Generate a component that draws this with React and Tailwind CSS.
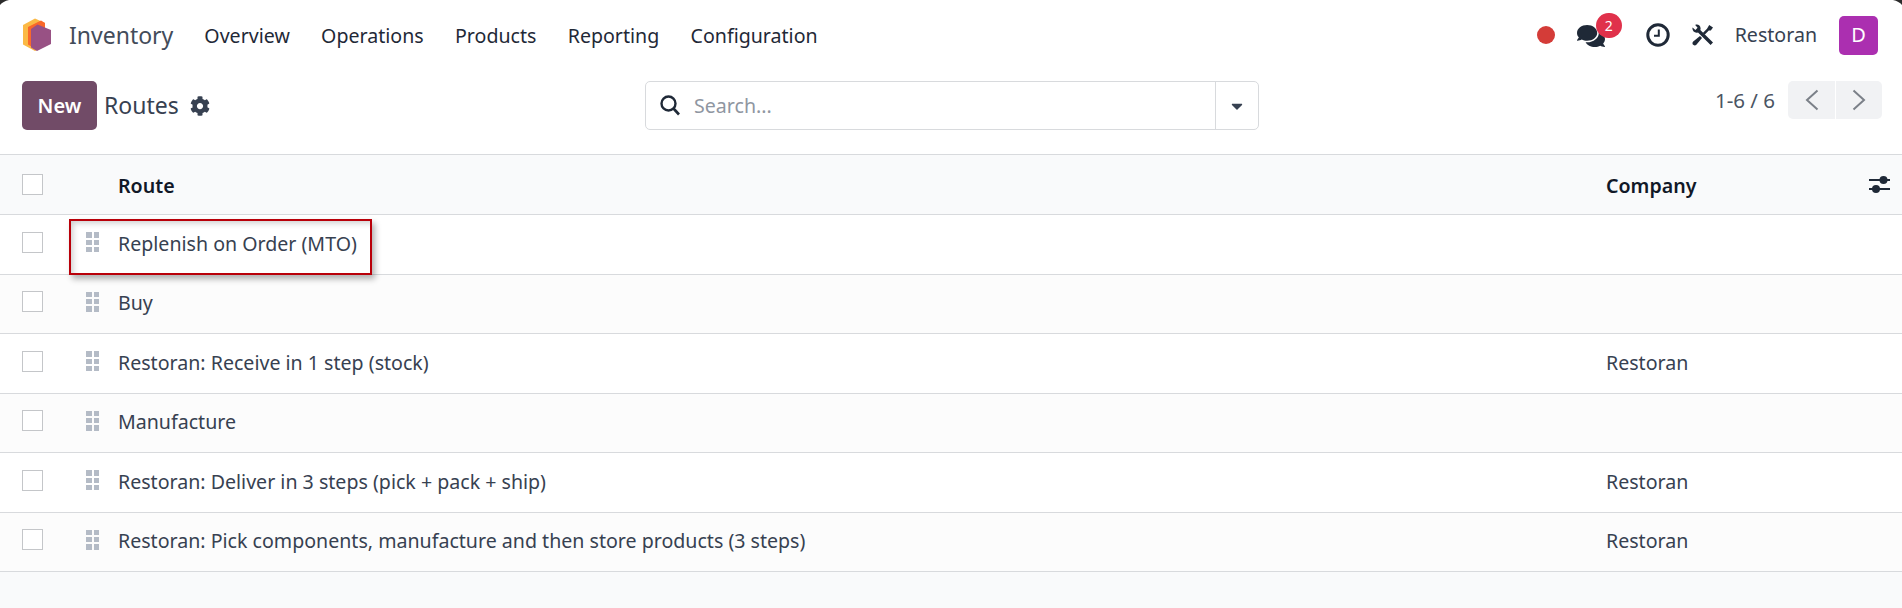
import React from "react";
import { FaCog, FaComments, FaCaretDown } from "react-icons/fa";

const rows = [
  ["Replenish on Order (MTO)", ""],
  ["Buy", ""],
  ["Restoran: Receive in 1 step (stock)", "Restoran"],
  ["Manufacture", ""],
  ["Restoran: Deliver in 3 steps (pick + pack + ship)", "Restoran"],
  ["Restoran: Pick components, manufacture and then store products (3 steps)", "Restoran"],
];

function Logo() {
  return (
    <svg width="30" height="34" viewBox="0 0 30 34" className="block">
      <path d="M13 0.5 L23 5 L23 28 L13 33 L1 26.5 V7 Z" fill="#fbb945" />
      <path d="M19 2.5 L23 5 L23 28 L15 32 L6 26.5 V9 Z" fill="#f9682a" />
      <path d="M15.5 6.5 L29 12 V26 L15 33 L9 29.5 V11 Z" fill="#985184" />
    </svg>
  );
}

function Clock() {
  return (
    <svg width="24" height="24" viewBox="0 0 24 24" fill="none" stroke="#1f2937">
      <circle cx="12" cy="12" r="10.2" strokeWidth="3" />
      <path d="M12.8 6.5 V12.8 H8" strokeWidth="2" />
    </svg>
  );
}

function Tools() {
  return (
    <svg width="22" height="22" viewBox="0 0 22 22" fill="#1f2937">
      <path d="M3.2 1 C5.6 -0.2 8.6 1.6 8.6 4.4 C8.6 5 8.5 5.5 8.3 6 L21 18.4 L18.6 21 L6 8.4 C3.2 9.4 0.4 7.4 0.4 4.6 C0.4 4.2 0.5 3.8 0.6 3.4 L3.4 6 L5.6 3.8 Z" />
      <path d="M17.2 1 L21 3.6 L18.8 6.4 L16.8 6.6 L12.6 10.8 L10.8 9 L15 4.8 Z" />
      <path d="M8 12 L10 14 L4.6 20.6 C3.4 21.8 1.6 21.6 0.8 20.6 C0.2 19.6 0.4 18.4 1.2 17.6 Z" />
    </svg>
  );
}

function Sliders() {
  return (
    <svg width="22" height="20" viewBox="0 0 22 20" fill="#1f2937">
      <rect x="0" y="4" width="21" height="2" />
      <rect x="0" y="13" width="21" height="2" />
      <circle cx="14.5" cy="5" r="4" />
      <circle cx="7" cy="14" r="4" />
    </svg>
  );
}

function Chevron({ right }) {
  return (
    <svg width="14" height="22" viewBox="0 0 14 22" fill="none" stroke="#7b8088" strokeWidth="2">
      <path d={right ? "M1.5 1.5 L12 11 L1.5 20.5" : "M12.5 1.5 L2 11 L12.5 20.5"} />
    </svg>
  );
}

function SearchIcon() {
  return (
    <svg width="20" height="21" viewBox="0 0 20 21" fill="none" stroke="#1f2937">
      <circle cx="8.5" cy="8.5" r="7" strokeWidth="2.4" />
      <path d="M13.5 13.5 L19 19.5" strokeWidth="2.6" />
    </svg>
  );
}

function Grip() {
  return (
    <div className="grid grid-cols-2 gap-x-[2px] gap-y-[2px] w-[13px]">
      {[0, 1, 2, 3, 4, 5].map((i) => (
        <span key={i} className="block h-[5.4px] bg-[#b4bbc6]" />
      ))}
    </div>
  );
}

function Box() {
  return <span className="block w-[21px] h-[21px] border border-[#c4c6c9] bg-white" />;
}

export default function App() {
  return (
    <div
      className="relative w-[1902px] h-[608px] overflow-hidden bg-[#f9fafb] flex flex-col text-[19.6px] text-[#374151]"
      style={{ fontFamily: '"Noto Sans", "Open Sans", sans-serif' }}
    >
      <header className="h-[70px] bg-white flex items-center pl-[22px] pr-[24px] shrink-0">
        <Logo />
        <span className="ml-[17px] text-[23px] mt-[1px] text-[#434c5a]">Inventory</span>
        <nav className="ml-[31px] flex gap-[31.3px] text-[#1f2937] text-[19.6px] mt-[1px]">
          <span>Overview</span>
          <span>Operations</span>
          <span>Products</span>
          <span>Reporting</span>
          <span>Configuration</span>
        </nav>
        <div className="ml-auto flex items-center">
          <span className="w-[18px] h-[18px] rounded-full bg-[#d43c38]" />
          <div className="relative ml-[22px] h-[24px]">
            <FaComments size={28} color="#1f2937" className="-mt-[1px]" />
            <span className="absolute -top-[10px] left-[19px] w-[26px] h-[25px] rounded-full bg-[#e0314b] text-white text-[14px] flex items-center justify-center">2</span>
          </div>
          <div className="ml-[41px]"><Clock /></div>
          <div className="ml-[22px]"><Tools /></div>
          <span className="ml-[21px] text-[#374151]">Restoran</span>
          <span className="ml-[22px] w-[39px] h-[39px] rounded-[5px] bg-[#ab2fb0] text-white text-[20px] flex items-center justify-center">D</span>
        </div>
      </header>

      <section className="h-[85px] pt-[11px] bg-white border-b border-[#d8dadd] flex items-start pl-[22px] pr-[20px] shrink-0 relative">
        <div className="flex items-center w-[620px]">
          <button className="w-[75px] h-[49px] rounded-[5px] bg-[#714b67] text-white font-semibold text-[20px]">New</button>
          <span className="ml-[7px] text-[23px] text-[#374151]">Routes</span>
          <FaCog size={20} color="#374151" className="ml-[11px]" />
        </div>
        <div className="ml-[3px] w-[614px] h-[49px] border border-[#d8dadd] rounded-[5px] flex items-center">
          <span className="ml-[14px]"><SearchIcon /></span>
          <span className="ml-[14px] text-[#8f96a1] flex-1">Search...</span>
          <span className="w-[43px] h-full border-l border-[#d8dadd] flex items-center justify-center">
            <FaCaretDown size={18} color="#374151" />
          </span>
        </div>
        <div className="ml-auto flex items-center h-[38px]">
          <span className="text-[#4b5563] text-[20.5px]">1-6 / 6</span>
          <div className="ml-[13px] flex gap-[1px]">
            <span className="w-[47px] h-[38px] rounded-l-[5px] bg-[#f1f2f4] flex items-center justify-center"><Chevron /></span>
            <span className="w-[46px] h-[38px] rounded-r-[5px] bg-[#f1f2f4] flex items-center justify-center"><Chevron right /></span>
          </div>
        </div>
      </section>

      <div className="h-[60px] bg-[#f9fafb] border-b border-[#d8dadd] flex items-center shrink-0 font-semibold text-[#111827] text-[19.6px]">
        <div className="w-[118px] pl-[22px]"><Box /></div>
        <div className="flex-1 mt-[3px]">Route</div>
        <div className="w-[225px] mt-[3px]">Company</div>
        <div className="w-[71px] flex justify-end pr-[11px]"><Sliders /></div>
      </div>

      {rows.map(([route, company], i) => (
        <div
          key={route}
          className={`h-[59.5px] border-b border-[#d8dadd] flex items-center shrink-0 ${i % 2 === 0 ? "bg-white" : "bg-[#fcfcfc]"}`}
        >
          <div className="w-[118px] pl-[22px] flex items-center -mt-[4px]">
            <Box />
            <div className="ml-[43px]"><Grip /></div>
          </div>
          <div className="flex-1 -mt-[2px]">{route}</div>
          <div className="w-[296px] -mt-[2px]">{company}</div>
        </div>
      ))}

      <div className="absolute left-[69px] top-[219px] w-[303px] h-[56px] border-2 border-[#b90009] shadow-[3px_4px_6px_rgba(0,0,0,0.3),inset_4px_4px_6px_-2px_rgba(0,0,0,0.2)]" />
      <svg className="absolute left-0 top-0" width="9" height="5" viewBox="0 0 9 5"><path d="M0 0 H9 C5 1 2 2.5 0 5 Z" fill="#2b2b2b" /></svg>
      <svg className="absolute right-0 top-0" width="9" height="5" viewBox="0 0 9 5"><path d="M9 0 H0 C4 1 7 2.5 9 5 Z" fill="#2b2b2b" /></svg>
    </div>
  );
}
